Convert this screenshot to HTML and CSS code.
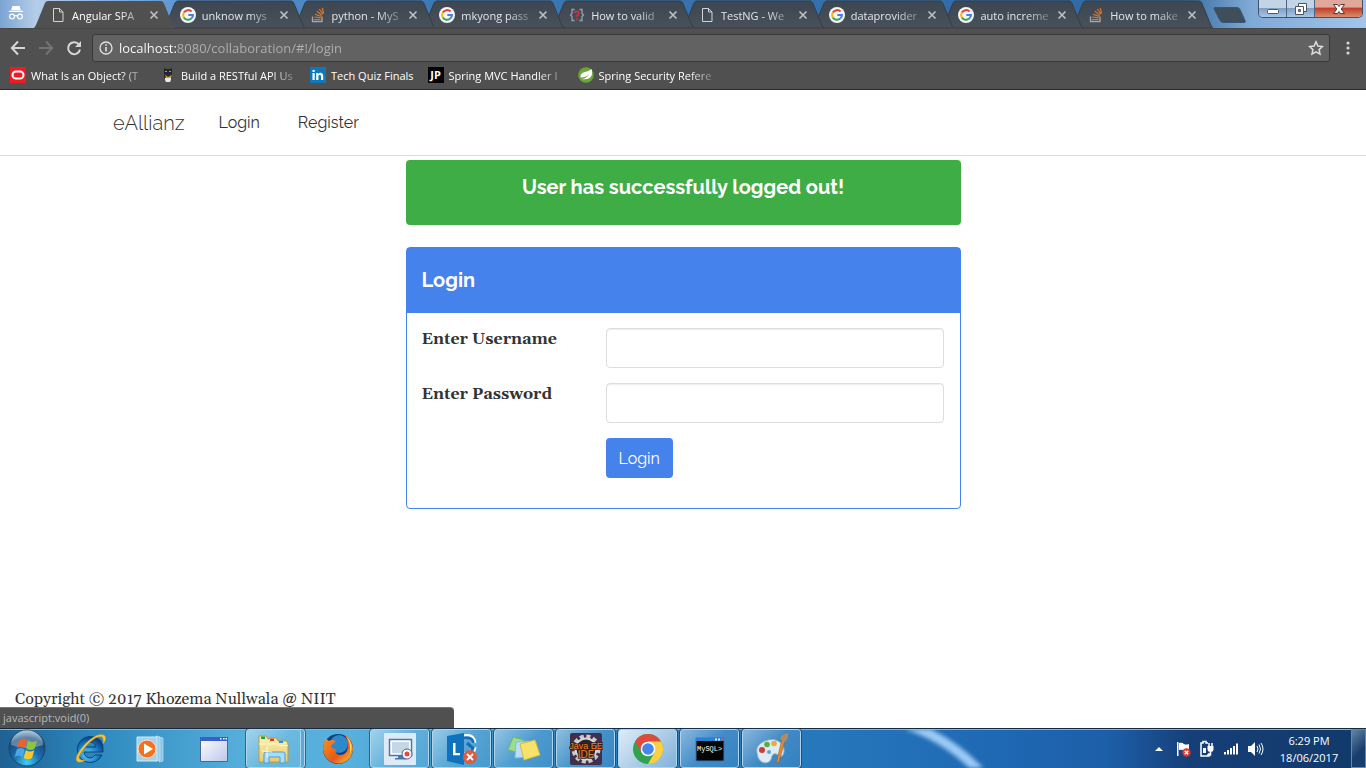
FILE: index.html
```html
<!DOCTYPE html>
<html lang="en">
<head>
<meta charset="utf-8">
<meta name="viewport" content="width=device-width, initial-scale=1">
<title>Angular SPA</title>
<link rel="stylesheet" href="styles.css">
</head>
<body>
<svg class="defs" aria-hidden="true">
  <defs>
    <linearGradient id="g-tab" x1="0" y1="0" x2="0" y2="1"><stop offset="0" stop-color="#3c4752"/><stop offset="1" stop-color="#4a5058"/></linearGradient>
    <radialGradient id="g-orb" cx=".5" cy=".9" r=".9"><stop offset="0" stop-color="#3fd0f5"/><stop offset=".4" stop-color="#1c6fae"/><stop offset=".75" stop-color="#174a7c"/><stop offset="1" stop-color="#9cc0da"/></radialGradient>
    <radialGradient id="g-ie" cx=".4" cy=".7" r=".7"><stop offset="0" stop-color="#5fd0fa"/><stop offset=".6" stop-color="#1779c4"/><stop offset="1" stop-color="#0a3c80"/></radialGradient>
    <linearGradient id="g-win" x1="0" y1="0" x2="1" y2="1"><stop offset="0" stop-color="#fff"/><stop offset="1" stop-color="#bcc6ea"/></linearGradient>
    <linearGradient id="g-folder" x1="0" y1="0" x2="0" y2="1"><stop offset="0" stop-color="#fdf3b4"/><stop offset="1" stop-color="#e9c968"/></linearGradient>
    <linearGradient id="g-fox" x1="0" y1="0" x2="1" y2="1"><stop offset="0" stop-color="#f79a1e"/><stop offset=".6" stop-color="#e8581b"/><stop offset="1" stop-color="#f9d33c"/></linearGradient>
    <symbol id="tab-shape" viewBox="0 0 141 28" preserveAspectRatio="none">
      <path d="M0 28 L2 25 L11 3 Q12 1 14 1 L127 1 Q129 1 130 3 L139 25 L141 28 Z"/>
    </symbol>
    <symbol id="i-page" viewBox="0 0 16 16"><path d="M3.5 1.5h6l3.500 3.500v9.500h-9.500zM9.500 1.500v3.500h3.500" fill="none" stroke="#d0d4d8"/></symbol>
    <symbol id="i-google" viewBox="0 0 16 16">
      <circle cx="8" cy="8" r="8" fill="#f4f6f8"/>
      <path d="M3.800 5.600A5 5 0 0 1 11.600 4.500" fill="none" stroke="#e54335" stroke-width="2"/>
      <path d="M3.800 5.600A5 5 0 0 0 3.800 10.500" fill="none" stroke="#f6b704" stroke-width="2"/>
      <path d="M3.800 10.500A5 5 0 0 0 11.300 11.600" fill="none" stroke="#34a353" stroke-width="2"/>
      <path d="M11.300 11.600A5 5 0 0 0 13 8H8.300" fill="none" stroke="#4280ef" stroke-width="2"/>
    </symbol>
    <symbol id="i-stack" viewBox="0 0 16 16">
      <path d="M2.500 9.500v5h9.500v-5" fill="none" stroke="#a6a9ac" stroke-width="1.300"/>
      <path d="M4 12.500h6.500M4.200 10l6.400.8M5 7.200l6 2.200M6.800 4.300l5.200 3.900M9.300 2l3.600 5.200M12.300.8l1.300 5.700" stroke="#d9772e" stroke-width="1.200"/>
    </symbol>
    <symbol id="i-mky" viewBox="0 0 16 16">
      <path d="M5.500 2.500H3v4L1.500 8 3 9.500v4h2.500M10.500 2.500H13v4L14.500 8 13 9.500v4h-2.500" fill="none" stroke="#8fa3b8" stroke-width="1.300"/>
      <path d="M6 6V4.500h3.500v3L8 8.500v1.300M8 11.300v1.700" fill="none" stroke="#e02f3c" stroke-width="1.500"/>
    </symbol>
    <symbol id="i-x" viewBox="0 0 10 10"><path d="M1.500 1.500l7 7M8.500 1.500l-7 7" stroke="#b9bfc5" stroke-width="1.700"/></symbol>
  </defs>
</svg>

<header class="browser">
  <div class="tabstrip">
    <svg class="incognito" viewBox="0 0 18 18" aria-hidden="true" fill="#fff">
      <path d="M5 1h8l1.500 5h-11zM1 6.500h16V8H1z"/>
      <g fill="none" stroke="#fff" stroke-width="1.300"><circle cx="4.500" cy="13" r="2.700"/><circle cx="13.500" cy="13" r="2.700"/><path d="M7 12.500q2-1 4 0"/></g>
    </svg>
    <nav class="tabs" aria-label="Tabs">
      <div class="tab tab-active"><svg class="tab-bg"><use href="#tab-shape"/></svg><svg class="fav"><use href="#i-page"/></svg><a class="tab-title" href="#">Angular SPA</a><button class="tab-close" aria-label="Close tab"><svg><use href="#i-x"/></svg></button></div>
      <div class="tab"><svg class="tab-bg"><use href="#tab-shape"/></svg><svg class="fav"><use href="#i-google"/></svg><a class="tab-title" href="#">unknow mys</a><button class="tab-close" aria-label="Close tab"><svg><use href="#i-x"/></svg></button></div>
      <div class="tab"><svg class="tab-bg"><use href="#tab-shape"/></svg><svg class="fav"><use href="#i-stack"/></svg><a class="tab-title" href="#">python - MyS</a><button class="tab-close" aria-label="Close tab"><svg><use href="#i-x"/></svg></button></div>
      <div class="tab"><svg class="tab-bg"><use href="#tab-shape"/></svg><svg class="fav"><use href="#i-google"/></svg><a class="tab-title" href="#">mkyong pass</a><button class="tab-close" aria-label="Close tab"><svg><use href="#i-x"/></svg></button></div>
      <div class="tab"><svg class="tab-bg"><use href="#tab-shape"/></svg><svg class="fav"><use href="#i-mky"/></svg><a class="tab-title" href="#">How to valid</a><button class="tab-close" aria-label="Close tab"><svg><use href="#i-x"/></svg></button></div>
      <div class="tab"><svg class="tab-bg"><use href="#tab-shape"/></svg><svg class="fav"><use href="#i-page"/></svg><a class="tab-title" href="#">TestNG - We</a><button class="tab-close" aria-label="Close tab"><svg><use href="#i-x"/></svg></button></div>
      <div class="tab"><svg class="tab-bg"><use href="#tab-shape"/></svg><svg class="fav"><use href="#i-google"/></svg><a class="tab-title" href="#">dataprovider</a><button class="tab-close" aria-label="Close tab"><svg><use href="#i-x"/></svg></button></div>
      <div class="tab"><svg class="tab-bg"><use href="#tab-shape"/></svg><svg class="fav"><use href="#i-google"/></svg><a class="tab-title" href="#">auto increme</a><button class="tab-close" aria-label="Close tab"><svg><use href="#i-x"/></svg></button></div>
      <div class="tab"><svg class="tab-bg"><use href="#tab-shape"/></svg><svg class="fav"><use href="#i-stack"/></svg><a class="tab-title" href="#">How to make</a><button class="tab-close" aria-label="Close tab"><svg><use href="#i-x"/></svg></button></div>
    </nav>
    <button class="new-tab" aria-label="New tab"><svg viewBox="0 0 34 17"><path d="M2 .5h22q2 0 3 2l5 11q1 2-1 2H10q-2 0-3-2L1 2Q.5.500 2 .5z" fill="#404e5c" stroke="#34587c"/></svg></button>
    <div class="window-buttons">
      <button class="win-btn" aria-label="Minimize"><svg viewBox="0 0 14 14"><rect x="1.500" y="7.500" width="11" height="4" rx="1" fill="#fff" stroke="#4a5568"/></svg></button>
      <button class="win-btn" aria-label="Restore"><svg viewBox="0 0 14 14"><g fill="#fff" stroke="#4a5568"><path d="M4.500 1.500h8v8h-8z"/><path d="M1.500 4.500h8v8h-8z"/><path d="M4.500 7.500h2v2h-2z" fill="#7c9cc0"/></g></svg></button>
      <button class="win-btn win-close" aria-label="Close"><svg viewBox="0 0 14 14"><path d="M1.500 2.500h4L7 4.500l1.500-2h4L9.200 7l3.300 4.500h-4L7 9.500l-1.500 2h-4L4.800 7z" fill="#fff" stroke="#5a3438"/></svg></button>
    </div>
  </div>

  <div class="toolbar">
    <button class="tool" aria-label="Back"><svg viewBox="0 0 16 16"><path d="M15 8H2M8 1.500L1.800 8 8 14.500" fill="none" stroke="#d6d6d6" stroke-width="2"/></svg></button>
    <button class="tool" aria-label="Forward"><svg viewBox="0 0 16 16"><path d="M1 8h13M8 1.500L14.200 8 8 14.500" fill="none" stroke="#747474" stroke-width="2"/></svg></button>
    <button class="tool" aria-label="Reload"><svg viewBox="0 0 16 16"><path d="M13 4.600A6 6 0 1 0 14 9.500" fill="none" stroke="#d6d6d6" stroke-width="2"/><path d="M15 1v6H9z" fill="#d6d6d6"/></svg></button>
    <div class="omnibox">
      <svg class="info" viewBox="0 0 14 14"><circle cx="7" cy="7" r="6" fill="none" stroke="#e2e2e2" stroke-width="1.300"/><path d="M7 6v4.500M7 3.200v1.600" stroke="#e2e2e2" stroke-width="1.600"/></svg>
      <input class="url" type="text" aria-label="Address" value="localhost:8080/collaboration/#!/login">
      <button class="star" aria-label="Bookmark this page"><svg viewBox="0 0 16 16"><path d="M8 1.800l1.900 4.200 4.500.5-3.300 3.100.9 4.500L8 11.800l-4 2.300.9-4.500L1.600 6.500l4.500-.5z" fill="none" stroke="#dedede" stroke-width="1.500"/></svg></button>
    </div>
    <button class="menu" aria-label="Menu"><svg viewBox="0 0 4 16" fill="#d6d6d6"><circle cx="2" cy="3" r="1.600"/><circle cx="2" cy="8" r="1.600"/><circle cx="2" cy="13" r="1.600"/></svg></button>
  </div>

  <nav class="bookmarks" aria-label="Bookmarks">
    <a class="bookmark" href="#"><svg viewBox="0 0 16 16"><path d="M0 0h16v16H0z" fill="#ed1c24"/><rect x="2.500" y="4.500" width="11" height="7" rx="3.500" fill="none" stroke="#fff" stroke-width="2"/></svg><span class="bookmark-text">What Is an Object? (T</span></a>
    <a class="bookmark" href="#"><svg viewBox="0 0 16 16"><path d="M4 1l2 1h4l2-1v6H4z" fill="#25262b"/><path d="M5 4h2v1H5zM9 4h2v1H9z" fill="#999"/><path d="M4 7h8v3q0 2-4 2T4 10z" fill="#2f2b28"/><path d="M5 8l3 2 4-2-1 3H6z" fill="#d9a52b"/><path d="M5 11h6v2l-1 2H6l-1-2z" fill="#e8e8e8"/></svg><span class="bookmark-text">Build a RESTful API Us</span></a>
    <a class="bookmark bookmark-short" href="#"><svg viewBox="0 0 16 16"><rect width="16" height="16" fill="#0f78b8"/><path d="M2.500 6h2.200v7H2.500zM2.500 3h2.200v2H2.500zM6.200 6h2v1q2.300-2.200 4.300-.2.700.8.700 2.200v4H11V9.500q0-1.700-1.300-1.700T8.400 9.500V13H6.200z" fill="#fff"/></svg><span class="bookmark-text">Tech Quiz Finals</span></a>
    <a class="bookmark" href="#"><span class="jp">JP</span><span class="bookmark-text">Spring MVC Handler I</span></a>
    <a class="bookmark" href="#"><svg viewBox="0 0 16 16"><circle cx="8" cy="8" r="7.800" fill="#68a63a"/><path d="M13.500 2q1.800 6-1.600 8.700Q8.500 13 3.500 12q4 0 7.500-4.200Q6.500 11 2.500 10.500 2 6.500 6 5.200 11 4.500 13.500 2z" fill="#fff"/></svg><span class="bookmark-text">Spring Security Refere</span></a>
  </nav>
</header>

<div class="page">
  <nav class="navbar">
    <div class="container">
      <a class="brand" href="#">eAllianz</a>
      <a class="nav-link" href="#">Login</a>
      <a class="nav-link" href="#">Register</a>
    </div>
  </nav>
  <main class="content">
    <div class="alert" role="status">User has successfully logged out!</div>
    <section class="panel">
      <h1 class="panel-heading">Login</h1>
      <form class="panel-body">
        <label for="username">Enter Username</label>
        <input class="field" id="username" type="text">
        <label for="password">Enter Password</label>
        <input class="field" id="password" type="password">
        <button class="submit" type="button">Login</button>
      </form>
    </section>
  </main>
  <footer class="footer">Copyright © 2017 Khozema Nullwala @ NIIT</footer>
  <div class="status-bubble">javascript:void(0)</div>
</div>

<div class="taskbar">
  <svg class="streak" viewBox="0 0 100 40" preserveAspectRatio="none"><path d="M-6 -8Q44 4 82 46" fill="none" stroke="#9ccaf5" stroke-width="10"/></svg>
  <button class="start" aria-label="Start"><svg viewBox="0 0 38 38">
    <circle cx="19" cy="19" r="18" fill="url(#g-orb)" stroke="#1b4668"/>
    <path d="M3 16a16 15 0 0 1 32 0Q19 22 3 16z" fill="#fff" opacity=".3"/>
    <path d="M11 11q4-3 8 0l-2 8q-4-3-8 0z" fill="#e8622c"/><path d="M20 11.500q4 3 9 0l-2.300 8q-4 3-8.500 0z" fill="#8fc43e"/>
    <path d="M8.700 20.500q4-3 8 0l-2 7.500q-4-3-8 0z" fill="#4aa8e8"/><path d="M17.800 21q4.300 3 8.500 0L24 29q-4 2.600-8.300 0z" fill="#fbc82c"/>
  </svg></button>
  <div class="tasks">
    <button class="task" aria-label="Internet Explorer"><svg viewBox="0 0 34 34"><path fill-rule="evenodd" d="M17 4.500A13 13 0 1 0 29 23h-7q-2 3-5 3-5 0-6-6h19q1.500-15.500-13-15.500zM11.500 15q1-5 5.500-5t5.500 5z" fill="url(#g-ie)" stroke="#0c4377"/><path d="M5 30Q-1 27 12 12 24 0 31 3q4 3-1 9 1-5-1-7-5-2-14 7-9 10-9 14 1 3 7 2-5 3-8 2z" fill="#f8c432" stroke="#c98d14" stroke-width=".4"/></svg></button>
    <button class="task" aria-label="Media Player"><svg viewBox="0 0 34 34"><path d="M24 5l4 1v23l-4 1zM21 4l4 1v23l-4 1z" fill="#86c4e8" stroke="#c4e4f7" stroke-width=".7"/><path d="M2 5h20v24H2z" fill="#a5d1ec" stroke="#d2ebfa"/><circle cx="12" cy="17" r="9" fill="#f4711e" stroke="#fde2c8"/><path d="M9 11.500l9 5.500-9 5.500z" fill="#fff"/></svg></button>
    <button class="task" aria-label="Window"><svg viewBox="0 0 34 34"><path d="M3.500 5.500h27v24h-27z" fill="url(#g-win)" stroke="#47669c"/><path d="M3 5h28v4H3z" fill="#375fd0"/><path d="M23 6h1.500v1.500H23zM26 6h1.500v1.500H26zM28.500 6H30v1.500h-1.500z" fill="#fff"/></svg></button>
    <button class="task task-open task-stack" aria-label="File Explorer"><svg viewBox="0 0 34 34"><path d="M3 7V4h7l2 3h1V6h7l2 3h1l1 0h7l1 3v18H3z" fill="url(#g-folder)" stroke="#c09a3f"/><path d="M5 4.500h4V7H5z" fill="#15a34b"/><path d="M14 6.500h4V9h-4z" fill="#d83d2b"/><path d="M23 9h4v2h-4z" fill="#2a8ed8"/><path d="M3 12h18l2 1.500h9" fill="none" stroke="#fff8cf"/><path d="M8 31v-9q0-2 2-2h17q2 0 2 2v9h-5v-6H13v6z" fill="#a9dcf5" stroke="#4f9fc8"/><path d="M11 14v12M6 19l10 1" stroke="#fff" opacity=".8"/></svg></button>
    <button class="task" aria-label="Firefox"><svg viewBox="0 0 34 34"><circle cx="17" cy="17" r="15" fill="#153f82"/><circle cx="18" cy="12" r="9" fill="#2d88cc"/><path d="M24 3q8 5 8 14A15 15 0 1 1 3.500 10L4 6l4 3q3-2 7 0l-3 3q-3 1-1 4l4 1q-2 5 4 6 7 0 8-8 0-7-3-12z" fill="url(#g-fox)"/><path d="M25 4q9 8 4 18 1-11-4-18z" fill="#fbdc55"/></svg></button>
    <button class="task task-open" aria-label="Screen Recorder"><svg viewBox="0 0 34 34"><rect x="1" y="1" width="32" height="32" rx="1" fill="#deeaf6"/><path d="M6.500 7.500h22v16h-22z" fill="#fff" stroke="#4779ae" stroke-width="1.500"/><path d="M9 10h17v11H9z" fill="#c5d7e5"/><path d="M15 24h5v2h-5zM12 26h11v1.500H12z" fill="#4779ae"/><circle cx="24" cy="22" r="5" fill="#fff" stroke="#3c6597"/><circle cx="24" cy="22" r="2.500" fill="#ef4444"/></svg></button>
    <button class="task task-open" aria-label="Lync"><svg viewBox="0 0 34 34"><g fill="none" stroke-width="3"><path d="M19 5q9-2 10 6M18 23q10 0 11-8" stroke="#fff" stroke-width="5"/><path d="M19 6q9-1 9 5M18 23q9 0 10-8M22 11l7 6" stroke="#126dbb"/></g><path d="M2 4l17-3v32L2 29z" fill="#0e72bd"/><path d="M8 11h2.500v10H15v2.300H8z" fill="#fff"/><circle cx="25" cy="25" r="7" fill="#d95c43"/><path d="M22 22l6 6M28 22l-6 6" stroke="#fff" stroke-width="1.800"/></svg></button>
    <button class="task task-open" aria-label="Sticky Notes"><svg viewBox="0 0 34 34"><path d="M6 5l11 3-4 13-12-3z" fill="#9bdc8d" stroke="#69b767"/><path d="M9 10l13-1 1 16-15 1z" fill="#b9dff8" stroke="#7ebde2"/><path d="M13 12l15-4 5 15-16 5z" fill="#f9e26c" stroke="#d4b740"/></svg></button>
    <button class="task task-open" aria-label="Java EE IDE"><svg viewBox="0 0 34 34"><rect x="1" y="1" width="32" height="32" rx="2" fill="#40304d"/><circle cx="17" cy="17" r="12.500" fill="none" stroke="#cbc8ce" stroke-width="4" stroke-dasharray="4 2.540"/><circle cx="17" cy="17" r="10.500" fill="#29232f" stroke="#d6d6d6" stroke-width="2"/><g fill="#f58021" font-family="Liberation Sans, sans-serif" text-anchor="middle" stroke="#351c15" stroke-width="1.500" paint-order="stroke"><text x="17" y="17" font-size="9">Java EE</text><text x="17" y="26" font-size="10">IDE</text></g></svg></button>
    <button class="task task-open task-current" aria-label="Chrome"><svg viewBox="0 0 34 34"><circle cx="17" cy="17" r="15" fill="#31a350"/><path d="M4 9.500A15 15 0 0 1 30 9.500H17L10.500 20.700z" fill="#dd4b3e"/><path d="M30 9.500A15 15 0 0 1 17 32l6.500-11.300L17 9.500z" fill="#fdd043"/><circle cx="17" cy="17" r="7.300" fill="#fff"/><circle cx="17" cy="17" r="5.800" fill="#4485ee"/></svg></button>
    <button class="task task-open" aria-label="MySQL"><svg viewBox="0 0 34 34"><path d="M3 6h28v23H3z" fill="#050505" stroke="#3974b4"/><path d="M3 6h28v3H3z" fill="#2980d8"/><path d="M22 6.500h2v2h-2zM25 6.500h2v2h-2z" fill="#d7edff"/><path d="M28 6.500h2.500v2H28z" fill="#e55839"/><text x="4" y="19" fill="#fff" font-family="Liberation Mono, monospace" font-size="7">MySQL&gt;</text></svg></button>
    <button class="task task-open" aria-label="Paint"><svg viewBox="0 0 34 34"><path d="M2 21Q0 13 10 9q9-4 16 2 5 6 2 12-2 3-5 0-4-3-6 1-1 7-7 7-7-1-8-10z" fill="#dcebf4" stroke="#8ab2cd"/><circle cx="7" cy="18" r="3" fill="#d23c32"/><circle cx="12" cy="12.500" r="2.800" fill="#57ad41"/><circle cx="19" cy="11.500" r="2.800" fill="#f1a53b"/><circle cx="14" cy="20" r="2" fill="#5aa6d6"/><path d="M27 7l3 1-6 22q-3 3-2-2z" fill="#e28a35" stroke="#a55d1d" stroke-width=".6"/><path d="M25 7q0-4 8-6 1 5-3 9z" fill="#b18b63"/></svg></button>
  </div>
  <div class="tray">
    <button class="tray-btn" aria-label="Show hidden icons"><svg viewBox="0 0 18 18"><path d="M9 7l4 4H5z" fill="#fff"/></svg></button>
    <button class="tray-btn" aria-label="Action Center"><svg viewBox="0 0 18 18"><path d="M3 2h1.500v14H3zM5 3q3-1 5 1 2 1 5 0v7q-3 1-5 0-2-2-5-1z" fill="#fff"/><circle cx="12.500" cy="12.500" r="4.200" fill="#d8392f"/><path d="M10.800 10.800l3.400 3.400M14.200 10.800l-3.400 3.400" stroke="#fff" stroke-width="1.400"/></svg></button>
    <button class="tray-btn" aria-label="Power"><svg viewBox="0 0 18 18" fill="none" stroke="#fff" stroke-width="1.500"><path d="M10 3H8V1.500H5V3H3v13h8v-3"/><path d="M5 8h3v5H5z" fill="#fff" stroke="none"/><path d="M9.500 6h6v3q0 3-3 3t-3-3z" fill="#fff" stroke="none"/><path d="M11 3v3M14 3v3M12.500 12v3H9"/></svg></button>
    <button class="tray-btn" aria-label="Network"><svg viewBox="0 0 18 18" fill="#fff"><path d="M2 12h2v2.500H2zM5 10h2v4.500H5zM8 8h2v6.500H8zM11 6h2v8.500h-2zM14 3.500h2v11h-2z"/></svg></button>
    <button class="tray-btn" aria-label="Volume"><svg viewBox="0 0 18 18"><path d="M2 6h3l4-4v14l-4-4H2z" fill="#fff"/><path d="M11 6q2 3 0 6M13 4.500q3 4.500 0 9M15 3q4 6 0 12" fill="none" stroke="#fff"/></svg></button>
    <div class="clock"><span>6:29 PM</span><span>18/06/2017</span></div>
    <button class="show-desktop" aria-label="Show desktop"></button>
  </div>
</div>
</body>
</html>
```
FILE: styles.css
```css
* { box-sizing: border-box; }
body {
  margin: 0;
  height: 100vh;
  display: flex;
  flex-direction: column;
  background: #fff;
  font-family: "Open Sans", "Noto Sans", sans-serif;
  font-size: 11px;
  overflow: hidden;
}
button { margin: 0; padding: 0; border: 0; background: none; font: inherit; color: inherit; }
a { color: inherit; text-decoration: none; }
svg { display: block; }
.defs { position: absolute; width: 0; height: 0; }

/* Browser window */
.browser { background: #505050; border-bottom: 1px solid #31262b; color: #fff; }
.tabstrip {
  display: flex;
  height: 28px;
  background: linear-gradient(90deg, #7ba3d2 0, #b4cde8 36px, #5c94d2 180px, #3c78b4 440px, #316ca8 1000px, #33699d 1180px, #7fa9d5 1250px, #a3c5ea 100%);
}
.incognito { width: 16px; height: 18px; margin: 4px 10px 0 8px; flex: none; }
.tabs { display: flex; flex: 0 1 1179px; min-width: 0; }
.tab {
  position: relative;
  z-index: 1;
  display: flex;
  align-items: center;
  flex: 1 1 0;
  min-width: 0;
  height: 28px;
  padding: 2px 16px 0;
  margin-right: -11px;
  color: #dfe5eb;
}
.tab:last-child { margin-right: 0; }
.tab:nth-child(1) { z-index: 9; }
.tab:nth-child(2) { z-index: 8; }
.tab:nth-child(3) { z-index: 7; }
.tab:nth-child(4) { z-index: 6; }
.tab:nth-child(5) { z-index: 5; }
.tab:nth-child(6) { z-index: 4; }
.tab:nth-child(7) { z-index: 3; }
.tab:nth-child(8) { z-index: 2; }
.tab-bg { position: absolute; inset: 0; width: 100%; height: 100%; z-index: -1; fill: url(#g-tab); stroke: #333e49; }
.tab-active .tab-bg { fill: #505050; stroke: none; }
.tab-active { color: #fff; }
.fav { width: 16px; height: 16px; flex: none; }
.tab-title, .bookmark-text {
  overflow: hidden;
  white-space: nowrap;
  -webkit-mask-image: linear-gradient(90deg, #000 calc(100% - 26px), rgba(0, 0, 0, .2));
  mask-image: linear-gradient(90deg, #000 calc(100% - 26px), rgba(0, 0, 0, .2));
}
.tab-title { flex: 1; min-width: 0; margin: 0 5px 0 6px; }
.tab-close svg { width: 10px; height: 10px; }
.new-tab { width: 34px; height: 17px; margin: 7px 0 0; flex: none; }
.new-tab svg { width: 34px; height: 17px; }
.window-buttons {
  display: flex;
  height: 18px;
  margin: 0 3px 0 auto;
  border: 1px solid #3f526b;
  border-top: 0;
  border-radius: 0 0 5px 5px;
  overflow: hidden;
}
.win-btn {
  display: flex;
  align-items: center;
  justify-content: center;
  width: 28px;
  border-right: 1px solid #4f6582;
  background: linear-gradient(#c3d4e7 0 45%, #7f9fc4 50%, #a9c6e6);
}
.win-close { width: 47px; border-right: 0; background: linear-gradient(#e0a79b 0 40%, #c2402a 50%, #d98e6c); }
.win-btn svg { width: 14px; height: 14px; }

.toolbar { display: flex; align-items: center; height: 38px; padding: 0 12px 0 4px; border-top: 1px solid #474747; }
.tool { width: 28px; height: 28px; display: grid; place-items: center; }
.tool svg { width: 16px; height: 16px; }
.omnibox {
  display: flex;
  align-items: center;
  flex: 1;
  height: 28px;
  margin: 0 12px 0 4px;
  padding: 0 5px 0 6px;
  background: #626262;
  border: 1px solid #383838;
  border-radius: 3px;
}
.info { width: 14px; height: 14px; flex: none; }
.url {
  flex: 1;
  min-width: 0;
  margin-left: 6px;
  padding: 0;
  border: 0;
  font: 13px "Open Sans", sans-serif;
  color: transparent;
  background: linear-gradient(90deg, #fff 57px, #b0b0b0 57px);
  -webkit-background-clip: text;
  background-clip: text;
}
.star svg { width: 16px; height: 16px; }
.menu { width: 12px; height: 16px; }
.menu svg { width: 4px; height: 16px; margin: 0 auto; }
.bookmarks { display: flex; gap: 14px; height: 23px; padding: 0 10px 5px; }
.bookmark { display: flex; align-items: center; gap: 5px; }
.bookmark svg, .jp { width: 16px; height: 16px; flex: none; }
.bookmark-text { width: 115px; }
.bookmark-short .bookmark-text { width: auto; -webkit-mask-image: none; mask-image: none; }
.jp { background: #000; font: bold 11px/16px "Open Sans", sans-serif; text-align: center; }

/* Web page */
.page {
  position: relative;
  display: flex;
  flex-direction: column;
  flex: 1;
  min-height: 0;
  color: #333;
  font-family: Georgia, Gelasio, "Liberation Serif", serif;
  font-size: 16px;
}
.navbar { border-bottom: 1px solid #ddd; font-family: Raleway, Lato, sans-serif; }
.container { display: flex; align-items: center; max-width: 1170px; height: 65px; margin: 0 auto; padding: 0 15px; }
.brand { font-size: 20px; font-weight: 300; margin-right: 15px; }
.nav-link { font-size: 16px; padding: 0 19px; }
.content { width: 100%; max-width: 555px; margin: 4px auto 0; }
.alert {
  height: 65px;
  padding: 15px;
  border-radius: 4px;
  background: #3fad46;
  color: #fff;
  font: bold 20px/24px Raleway, Lato, sans-serif;
  text-align: center;
}
.panel { margin-top: 22px; border: 1px solid #4582ec; border-radius: 4px; }
.panel-heading { margin: 0; padding: 20px 15px; background: #4582ec; color: #fff; font: bold 20px/25px Raleway, Lato, sans-serif; }
.panel-body { display: grid; grid-template-columns: 184px 1fr; row-gap: 15px; padding: 15px 16px 30px 15px; font-weight: bold; }
.panel-body label { line-height: 22px; }
.field {
  width: 100%;
  height: 40px;
  padding: 8px 12px;
  border: 1px solid #ddd;
  border-radius: 4px;
  box-shadow: inset 0 1px 1px rgba(0, 0, 0, .075);
  font: inherit;
}
.submit {
  grid-column: 2;
  justify-self: start;
  height: 40px;
  padding: 0 13px;
  border-radius: 4px;
  background: #4582ec;
  color: #fff;
  font: 16px Raleway, Lato, sans-serif;
}
.footer { margin-top: auto; padding: 0 15px 17px; line-height: 24px; }
.status-bubble {
  position: absolute;
  left: 0;
  bottom: 0;
  width: 33.2%;
  height: 21px;
  padding-left: 3px;
  border-top: 1px solid #777;
  border-radius: 0 4px 0 0;
  background: #505050;
  color: #b8b8b8;
  font: 11px/20px "Open Sans", sans-serif;
}

/* Desktop taskbar */
.taskbar {
  position: relative;
  display: flex;
  flex: none;
  height: 40px;
  border-top: 1px solid #15283c;
  box-shadow: inset 0 1px 0 #86b5d8;
  background: linear-gradient(90deg, #1f6193 0, #2c87bd 90px, #55aeda 240px, #58b0dd 350px, #3b94cb 490px, #2b7fc1 620px, #2779bd 800px, #1f68b3 1000px, #1d5ea8 1110px, #163f78 1190px, #12396b 100%);
  color: #fff;
}
.streak { position: absolute; left: 900px; top: 0; width: 100px; height: 39px; overflow: hidden; filter: blur(2px); clip-path: inset(0); }
.start { width: 38px; height: 38px; margin: 0 14px 0 8px; }
.tasks { display: flex; gap: 3px; }
.task { width: 59px; height: 39px; display: grid; place-items: center; border: 1px solid transparent; border-radius: 3px; }
.task svg { width: 34px; height: 34px; }
.task-open {
  border-color: #b1d4ea;
  outline: 1px solid rgba(15, 53, 88, .6);
  background: linear-gradient(135deg, rgba(255, 255, 255, .45), rgba(255, 255, 255, .12) 50%, rgba(255, 255, 255, .06));
}
.task-stack { padding-right: 6px; box-shadow: inset -3px 0 #5aa9d4, inset -4px 0 #b1d4ea; }
.task-current { background: linear-gradient(135deg, rgba(255, 255, 255, .85), rgba(255, 255, 255, .4)); }
.tray { display: flex; align-items: center; margin-left: auto; }
.tray-btn { width: 24px; display: grid; place-items: center; }
.tray-btn svg { width: 18px; height: 18px; }
.clock { display: flex; flex-direction: column; width: 84px; text-align: center; line-height: 17px; }
.show-desktop { width: 15px; height: 39px; border: 1px solid #6389ab; background: linear-gradient(135deg, #6583a4, #173e6c 60%); }
```
